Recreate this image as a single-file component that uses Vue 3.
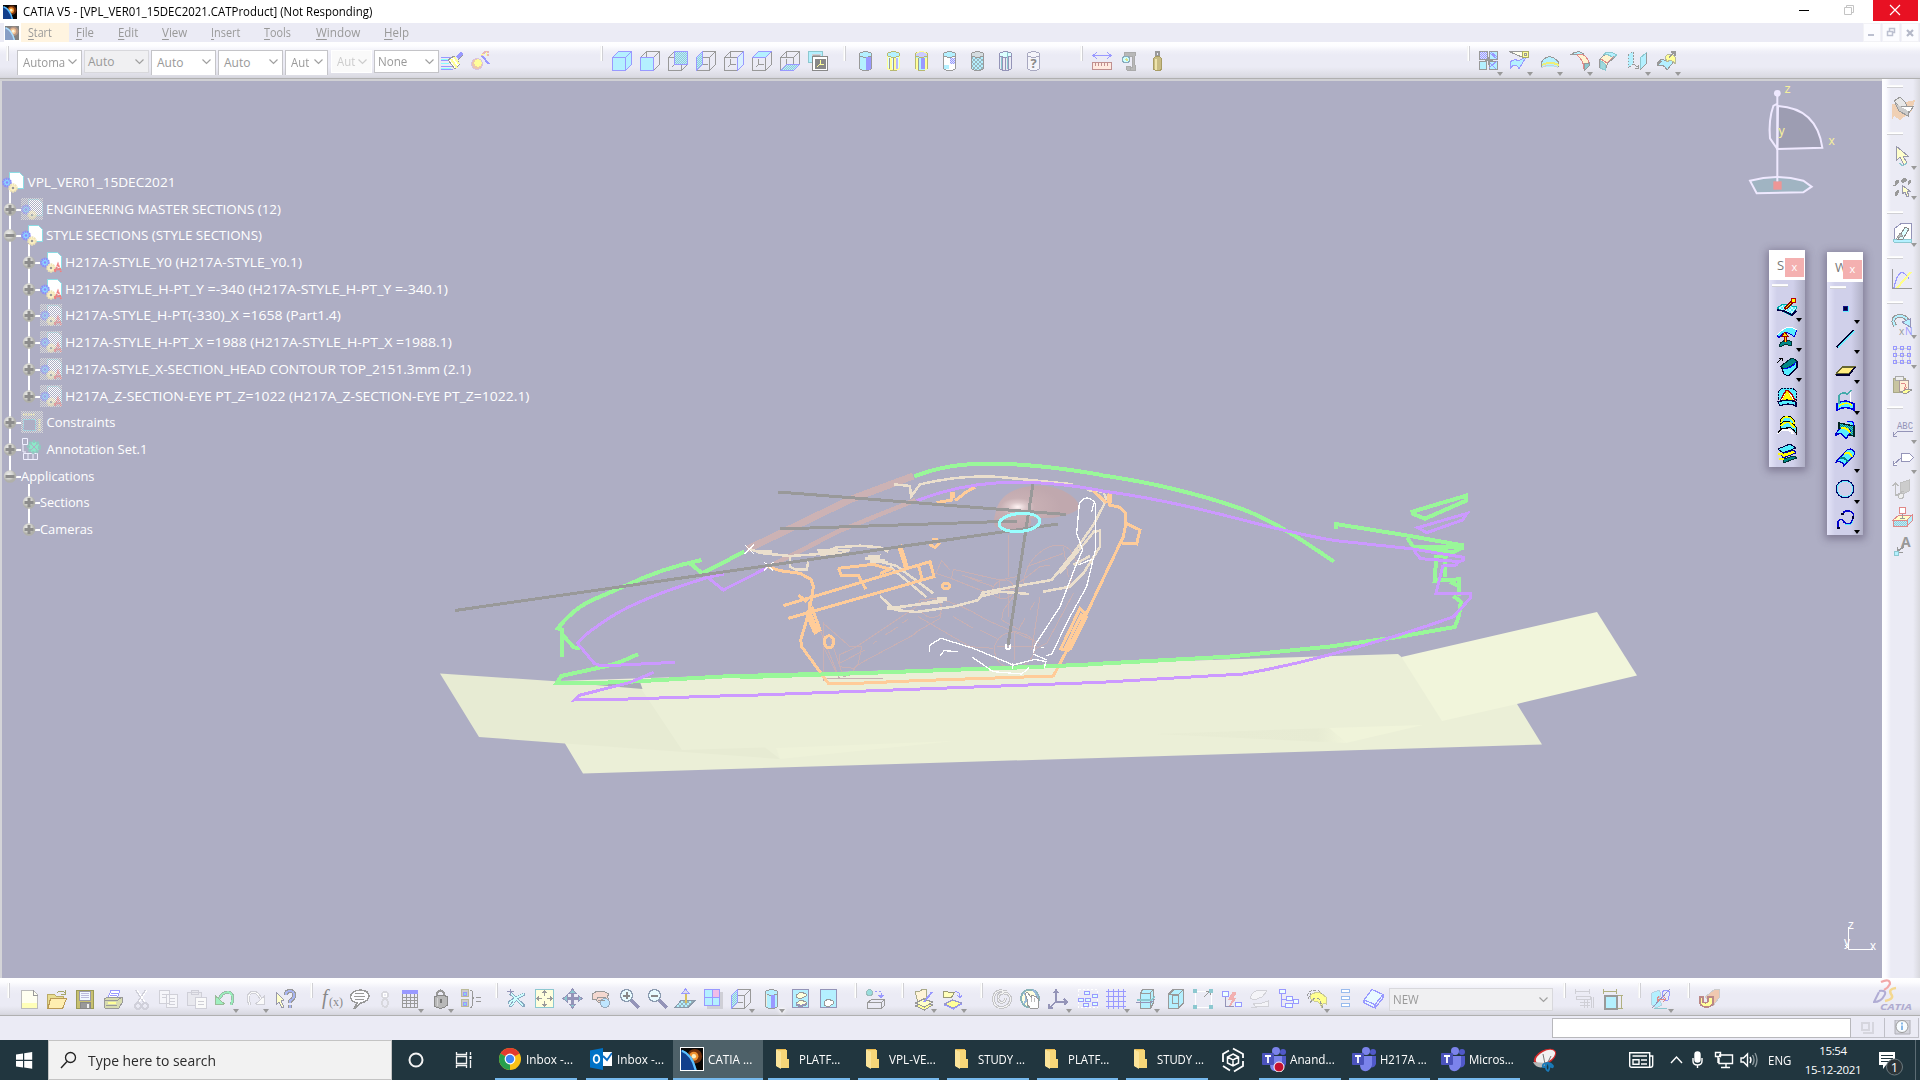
<script setup>
// Scales a label horizontally so that it fills the width reserved for it.
const vFit = {
  mounted(el, { value }) {
    const w = el.offsetWidth
    if (w) el.style.transform = `scaleX(${value / w})`
  }
}

const C = '#b4f0ff', B = '#9999ff', G = '#999999', Y = '#ffff99', R = '#e08888', T = '#8cc8d0', L = '#cfcfd6', N = '#9494b8'
const p = (d, s = G, f = 'none', w = 1) => `<path d="${d}" stroke="${s}" fill="${f}" stroke-width="${w}"/>`

const FACES = {
  front: 'M.5 6.5h13v13h-13z', back: 'M6.5.5h13v13h-13z', left: 'M.5 6.5l6-6v13l-6 6z',
  right: 'M13.5 6.5l6-6v13l-6 6z', top: 'M.5 6.5l6-6h13l-6 6z', bottom: 'M.5 19.5l6-6h13l-6 6z'
}
const wire = p('M.5 6.5h13v13h-13zM.5 6.5l6-6h13l-6 6M19.5.5v13l-6 6M6.5.5v5M6.5 8v5.5h5M6.5 13.5l-3 3')
const cube = (f, hatch) => wire + p(FACES[f], B, hatch ? 'url(#hatch)' : f === 'right' ? '#d8f0ff' : C)
const cyl = (body, top, line, extra = '') =>
  p('M2.5 3.5v13q0 3 6 3t6-3v-13', line, body) + `<ellipse cx="8.500" cy="3.500" rx="6" ry="2.700" stroke="${line}" fill="${top}"/>` + extra
const sheet = (y, f, s = G) => p(`M1.500 ${y}l8-4 9 3-8 5z`, s, f)

const I = {
  brush: p('M0 6.500h11M0 15.500h11', B) + p('M0 9.500h10M0 18.500h12', B) + p('M0 8h9M0 12.500h8M0 17h10', '#8ff') + p('M7 9l6-4 6 8-5 5z', G, '#fff') + p('M10 8l6 9M13 6l5 7', Y, 'none', 2) + p('M16 7l5-5', B, 'none', 4) + p('M17 9l5-5', G),
  wand: '<circle cx="6" cy="13" r="5.500" fill="#ecc9ad" stroke="#d9c3e2"/><circle cx="7" cy="12" r="3.600" fill="#ffff99"/>' + p('M11 5l7 8', B, 'none', 2) + p('M10 5l4-4M13 1h5M15 4h3', '#e8b8b8', 'none', 1.5) + p('M10 3h3M15 1v4', Y),
  cubeIso: p(FACES.front, B, C) + p(FACES.top, B, C) + p(FACES.right, B, C),
  cubeFront: cube('front'), cubeBack: cube('back', 1), cubeLeft: cube('left', 1), cubeRight: cube('right'), cubeTop: cube('top'), cubeBottom: cube('bottom', 1),
  views: p('M.5.5h14v11H.5z', T, C) + p('M4 3h8v8H4z', L, '#aaa') + p('M4.500 5.500h15v14h-15z', '#888', '#fff') + p('M7 8h10v9H7z', '#888', '#888') + p('M9 16l3-3V9M12 13h4', Y),
  cyl1: cyl(C, C, G) + p('M9 6h5v12q-2 1-5 1z', 'none', B) + p('M14.500 4v13', G),
  cyl2: cyl('#dff', C, '#b8b870') + p('M4.500 7v12M8.500 7v12M12 7v12', G) + p('M6 7v12M10 7v12', Y, 'none', 2) + p('M11 7h2v12h-2z', 'none', '#b8b8ff') + p('M2.500 5v11q0 3 6 3t6-3V5', Y),
  cyl3: cyl(C, '#ccf', '#b8b870') + p('M8 7h5v11H8z', 'none', B) + p('M4 7v12M13 7v12', Y, 'none', 2) + p('M5.500 7v12', G) + p('M2.500 3.500q2-3 6-3t6 3', Y),
  cyl4: cyl('#fff', C, G) + p('M9 7h5v6H9z', 'none', 'url(#hatchb)') + p('M3 14h5v4H3z', 'none', C),
  cyl5: cyl('url(#hatchc)', '#d4dce0', G),
  cyl6: cyl('none', '#dff', N) + p('M5.500 6v13M8.500 6v13M11.500 6v13', N) + p('M4.500 6v12M10.500 1v17', T),
  cyl7: cyl('#f4f4fa', '#f4f4fa', '#a8a8c0') + '<text x="8.500" y="17" font-size="13" font-weight="bold" text-anchor="middle" fill="#888">?</text>',
  ruler: p('M1 4.500h18M5 1L1 4.500 5 8M15 1l4 3.500L15 8', B) + p('M.5 11.500h19v7H.5z', '#c09090', '#ffeae0') + p('M3.500 12v3M6.500 12v3M9.500 12v3M12.500 12v3M15.500 12v3', '#c09090'),
  clamp: p('M2.500 1.500h11v3l-1 1v8l1 1v5h-5v-3h2v-11H7V8H2.500z', '#aaa', '#b8b8b8') + p('M4 15h4v4H5z', '#aaa', '#b8b8b8') + '<circle cx="4" cy="8.500" r="3.500" fill="#cff" stroke="#8ab"/>' + p('M4 8l2 2', '#dd8', 'none', 2),
  weight: '<circle cx="8.500" cy="2.800" r="2" fill="none" stroke="#999" stroke-width="2"/>' + p('M4.500 8.500q0-3 4-3t4 3v9q0 2-4 2t-4-2z', '#a89c64', '#c8bc84') + p('M7 8v11', '#eee4ac', 'none', 2),
  pattern: p('M.5.5h8v8h-8z', G, 'url(#hatchb)') + p('M10.500.5h8v8h-8z', G, C) + p('M.5 10.500h7v8h-7z', G, C) + p('M10.500 10.500h8v8h-8z', G, C) + p('M11 2l7 6M11 12l6 6M10 17l8-7M12 1l6 5', B) + p('M9.500 6v8M6 9.500h8', G),
  trim: p('M1 11q5-4 8-1l8-4-7 12Q6 10 1 18z', B, C) + p('M0 .5h14v6zM14 .5v6L0 .5', G, '#fffff0') + p('M13.500.5h6v6h-6z', '#aa6', Y) + p('M15.500 2.500h2v2h-2z'),
  dome: p('M1.500 16v-5Q9 .5 18.500 11v5', G, C) + p('M2 14q8-4 17 0', '#eeee77', 'none', 2) + p('M1.500 16.500q8-4 17 0', L),
  fillet: p('M0 4Q8-2 14 3l-5 1Q5 2 0 4z', G, C) + p('M7 4q4-2 8 1 4 4 4 8l-5 5q0-8-7-14z', R, '#fff4d0') + p('M14 13l5-1v3l-5 5z', G, T),
  chamfer: p('M0 10Q5 0 18 4l-9 8-3 7-6-3z', G, '#fff4d0') + p('M4 4Q9-2 18 4l-4 3Q9 2 4 4z', T, C) + p('M1 9v8l5 2v-6z', T, '#9fd8dc') + p('M2 8l6 4 7-7', R),
  sym: '<path d="M1 4l5-3v12l-5 4z" fill="#b4f0ff" stroke="#999" stroke-dasharray="1.500"/>' + p('M13 7l6-5v11l-6 6z', T, '#b4f0ff') + p('M19 2v11l-6 6', G) + p('M6 13l5 3M8 17h3v-3'),
  extrap: p('M0 13q5-8 8-3l4-5 6 4-8 10q-4-7-9-4z', G, C) + p('M8 6q5-6 10 0v7q-3-6-8-2z', '#bb9', Y) + p('M12 6l6-5M14 1h4v4', G, 'none', 1.600) + p('M0 14l4-4', G, 'none', 2),
  // bottom bar
  newf: p('M.5 1.500h12l4 4v14H.5z', '#bbb', '#fffff0') + p('M1 14h15v5H1z', 'none', '#ffffb8') + p('M12.500 1v5h4'),
  open: p('M.5 5.500h7l2 2h7v11H.5z', '#bbaa66', '#e8dc90') + p('M3.500 9.500h16l-4 10H1z', '#bb9955', '#ffeeb0') + p('M10 4q4-4 8 0M18 1v4h-4', '#a6a66a'),
  save: p('M.5 1.500h17v18h-17z', '#999955', '#c8c070') + p('M3.500 2h11v9h-11z', '#99a', '#f0f8ff') + p('M5 4.500h8M5 6.500h8M5 8.500h8', '#bbd') + p('M4.500 13.500h10v6h-10z', '#888', '#999') + p('M11 15h2v4h-2z', 'none', '#eee'),
  print: p('M5 9l3-8h9l-3 9z', B, '#fff') + p('M8 4h7M7 6h7M6 8h7', B) + p('M1 10l4-2h14v6l-3 5H2z', G, '#d8dcb0') + p('M1 11h14l4-3M3 16h11', G) + p('M5 14h8', Y, 'none', 2),
  cut: p('M3 1l8 12M13 1L5 13M5 14a3 3 0 1 0 .1 0M12 14a3 3 0 1 0 .1 0', '#d0d0da', 'none', 2) + p('M4 1l8 12M14 1L6 13', '#fff'),
  copy: p('M.5 1.500h10v13H.5zM7.500 5.500h11v13h-11z', '#d0d0d8', '#f6f6fa') + p('M3 5.500h4M3 8.500h4M10 9.500h6M10 12.500h6M10 15.500h6', '#d0d0d8'),
  paste: p('M.5 3.500h14v13H.5zM4 1h7v4H4z', '#cfcfd8', '#e8e8ee') + p('M8.500 8.500h11v11h-11z', '#cfcfd8', '#fafafa') + p('M11 12.500h6M11 15.500h6', L),
  undo: p('M3 12Q7 3 13 3q8 2 3 13', '#99bba8', 'none', 3) + p('M3 12Q7 3 13 3q7 2 3 13', '#99eebb', 'none', 1.500) + p('M.5 7v9l9-1z', '#9b9', '#9fefbf'),
  redo: p('M16 12Q12 3 7 3q-8 2-3 13', L, 'none', 3) + p('M16 12Q12 3 7 3q-7 2-3 13', '#fafafa') + p('M18.500 7v9l-9-1z', L, '#fafafa'),
  help: p('M1 3l8 8-3 1 3 6-2 1-3-6-3 3z', '#99a', '#ffffcc') + p('M11 6q0-4 4-4t4 4-4 6v2M15 16v3', G, 'none', 4) + p('M11 6q0-4 4-4t4 4-4 6v2M15 16v3', '#a8b4f0', 'none', 2),
  fx: '<text x="0" y="15" font-size="20" font-style="italic" font-family="Liberation Serif, serif" fill="#888">f</text><text x="7" y="17" font-size="12" font-family="Liberation Serif, serif" fill="#888">(x)</text>',
  talk: p('M7 14Q-1 12 1 6q3-5 10-5 8 1 8 6t-8 7l-7 6z', G, '#fcfcff', 1.400) + p('M5 4.500h9M4 7.500h11M5 10.500h9'),
  eight: p('M5 3a3 3 0 1 0 .1 0M5 10a3 4 0 1 0 .1 0', '#d8d8de', 'none', 2) + p('M5 4a2 2 0 1 0 .1 0', '#fff'),
  table: p('M.5 4.500h15v14H.5zM4.500 5v14M8.500 5v14M12.500 5v14M1 8.500h15M1 11.500h15M1 14.500h15') + p('M0 2.500h16', B, 'none', 4),
  lock: p('M4 10V4q3-5 7 0v6', G, 'none', 2.200) + p('M1.500 8q7-4 13 0v8q-6 6-13 1z', '#888', '#b8b8b8') + p('M8 10v4', '#777', 'none', 2) + p('M4 9v8', '#d4d4d4'),
  param: p('M.5.5h7v7h-7zM.5 10.500h7v7h-7z', '#bb9', '#ccc') + p('M2 3h3v3H2zM2 13h3v3H2z', B, '#8dd') + p('M9 1q3 0 2 5 0 3 2 3-2 0-2 4 1 6-2 6M15 8.500h5M15 12.500h5'),
  fly: p('M3 4l14 13M1 14l8-5 9-4M3 18l6-8 9 7', '#88a8c0', 'none', 3) + p('M4 5l12 11M2 14l7-5 8-4M4 17l5-7', '#cff', 'none', 1.500) + p('M0 2.500h7M3.500 0v6', N),
  fit: p('M.5.5h18v18H.5z', T, '#ffffdc') + p('M9.500 2v5M9.500 12v5M2 9.500h5M12 9.500h5M7.500 4l2-2 2 2M7.500 15l2 2 2-2M4 7.500l-2 2 2 2M15 7.500l2 2-2 2'),
  pan: p('M9.500 2v15M2 9.500h15', N, 'none', 3) + p('M6 4l3.500-4L13 4zM6 15l3.500 4 3.500-4zM4 6L0 9.500 4 13zM15 6l4 3.500-4 3.500z', N, T),
  rotate: p('M1 5Q9-1 18 5l-2 3q3 3 1 5l-7 1q-5-1-4-4l-5 1z', G, '#f4d8d0') + '<circle cx="14" cy="14" r="4.500" fill="#bfe6ff" stroke="#9ab"/>' + p('M6 8h9M7 11h7'),
  zin: p('M12 11l8 8', N, 'none', 3) + '<circle cx="7.500" cy="6.500" r="6" fill="#e8fbff" stroke="#8b9bb0" stroke-width="1.500"/>' + p('M4 6.500h7M7.500 3v7', '#888', 'none', 2),
  zout: p('M12 11l8 8', N, 'none', 3) + '<circle cx="7.500" cy="6.500" r="6" fill="#e8fbff" stroke="#8b9bb0" stroke-width="1.500"/>' + p('M4 6.500h7', '#888', 'none', 2),
  normal: p('M0 18.500l6-7h14l-7 7z', '#89a', 'url(#hatchc)') + p('M10.500 14V2', '#d8c060', 'none', 2) + p('M7 4l3.500-4L14 4z', B, '#dde'),
  multi: p('M3 3h16v17H3z', 'none', L) + p('M.5.5h15v16H.5z', B, C) + p('M9 1h6v7H9z', 'none', '#f0bce8') + p('M8.500 0v17M0 8.500h16', B),
  shade: cyl(C, C, G) + p('M8 6h4v13H8z', 'none', B) + p('M3.500 5v12', '#eed'),
  hide: p('M.5.5h16v18H.5z', N, C, 1.500) + p('M4 6l5-3 5 2v2l-6 3-4-2zM4 14l5-3 5 2v3l-6 2-4-2z', G, '#ffffdc') + p('M4 14v2l4 2 6-2v-2l-5 2z', 'none', N),
  swap: p('M.5.5h16v18H.5z', N, C, 1.500) + p('M4 13l4-3 5 2v3l-5 3-4-2z', G, '#fff'),
  boxball: '<circle cx="3.500" cy="3.500" r="3" fill="#9dd" stroke="#9bb"/><path d="M9 2h6v6" fill="none" stroke="#9999ff" stroke-dasharray="2"/>' + p('M12 6l3 3 3-3', B, B) + p('M1.500 13.500l4-3h13l-3 3zM1.500 13.500v6h14v-6M18.500 10.500v6l-3 3'),
  cata: p('M1 3q6 0 7-3h4v9l-8 4z', '#aa8', '#fff4d8') + sheet(17, Y) + sheet(14, '#ffffc8') + p('M10 13l8-10', B, '#dff', 2),
  catb: p('M.5 2.500h4l1 1h6l-3 5h-8z', '#997', '#ffffbb') + p('M12 3q5-1 5 5M14 6l3 3 2-3', B) + sheet(15, Y, '#99c') + p('M1.500 16l9 4 8-5', B),
  spiral: p('M15 3Q3-1 1.500 9q0 10 9 9.500 9-2 8-10-2-5-8-4.500-5 1-4.500 6 1 4 5 3 3-1 2-4', '#c4c4c8', 'none', 3) + p('M15 3Q3-1 1.500 9q0 10 9 9.500 9-2 8-10-2-5-8-4.500-5 1-4.500 6 1 4 5 3 3-1 2-4', '#f2f2f2'),
  spin: '<circle cx="10" cy="9.500" r="9" fill="#ffffe0" stroke="#8ab4b8" stroke-width="2"/>' + p('M4 4Q9 9 4 15M13 1q5 5 4 10', '#9bd', 'none', 2) + p('M8 12L5 5l2-2 4 5 0-1 2-1 1 1 2 0 1 2 1 0 1 2-1 8H10L7 15z', '#999', '#fff') + p('M11 9v4M14 9v4', '#bbb'),
  axes: p('M8 13V1M8 13h11M8 13l-7 6M6 4l2-3 2 3M16 10l3 3-3 3M1 15v4h4', N, 'none', 1.500),
  tree: '<path d="M.5.5h19v18H.5z" fill="none" stroke="#fff" stroke-dasharray="2"/>' + p('M6.500 2.500h5v3h-5zM14.500 5.500h5v3h-5zM.5 9.500h5v3h-5zM7.500 9.500h5v3h-5zM14.500 13.500h5v3h-5zM5.500 14.500h5v3h-5z', B, '#dff'),
  grid: p('M2.500 0v20M7.500 0v20M12.500 0v20M17.500 0v20M0 2.500h20M0 7.500h20M0 12.500h20M0 17.500h20', B),
  clip: p('M4.500 4.500l2-4h11v13l-3 6h-10z', G, C) + p('M4 4.500h10l3-4M14.500 4v15') + p('M1 11h14l4-3', T, 'none', 1.500) + p('M0 13.500h15l4-3', N),
  box: p('M.5 5.500l5-5h10v13l-5 6H.5z', G, C, 1.500) + p('M4.500 6.500h6v8h-6zM.5 5.500h10l5-5M10.500 5v14'),
  resize: p('M2 2h16v16H2z', '#fff') + p('M11 8l6-6M13 2h4v4') + p('M0 0h4v4H0zM16 0h4v4h-4zM0 16h4v4H0zM16 16h4v4h-4z', 'none', T),
  spark: p('M.5 2.500h6v5h-6zM13.500 13.500h6v4h-6z', B, '#eff') + p('M11 3L7 10h4l-4 8 7-9h-3l3-5z', '#f0b0b0', '#f4b0b0') + p('M12 17H3V8', N),
  ghost: p('M1 9Q4 1 11 1l7 1-5 6-8 3zM4 14h9l6-2v5H6zM2 18h6', '#d2d2d8', '#f4f4f8'),
  nodes: p('M.5.5h6v4h-6zM7.500 7.500h6v4h-6zM6.500 14.500h7v4h-7zM14.500 10.500h5v4h-5z', B, '#eff') + p('M2.500 5v12h4M2 10h5', B),
  gear: p('M4 9Q5 3 11 4l2-1 3 2 4 3v7q-4-2-4 4-3-8-7-6z', '#cc9', '#ffff90') + '<path d="M1 7Q3 0 12 1.500l4 3M4 14q4-7 9-4l4 9M2 10l3-6" fill="none" stroke="#999" stroke-dasharray="3 1.500"/>',
  bars: p('M.5.5h8v3h-8zM.5 7.500h8v3h-8zM.5 14.500h8v3h-8z', '#99bbee', '#fff'),
  layer: p('M1 11L9 .500l11 5-8 10zM1 11v3l11 5v-3.500M12 19l8-10V5.500', B, '#e8faff', 1.200),
  dims: p('M.5 2.500h14M.5 0v5M14.500 0v5M1 7.500h14v3H1zM5 13h10M5 16h10M16.500 8v11M18.500 8v11M9 10v9M12 10v9', '#cfcfd6', 'none', 1),
  dimc: p('M1.500 6.500h12v13h-12z', '#999', C, 2) + p('M.5 2.500h13M.5 0v5M13.500 0v5M18.500 6v13M15 6.500h5M15 19.500h5', '#b0b080', 'none', 1.500),
  measure: p('M2 4l7-3 2 4-2 5 3 6-6 3-5-4z', '#b8d0e0', C) + p('M2 19L20 0', N) + p('M12 3l3-2 5 2-2 8q-4 1-5-2z', B, 'none') + p('M7 10h9M13 7l3 3-3 3M9 7l-2 3 2 3', R) + p('M4 19h13', T),
  pipe: p('M6 8L16 0h4v9l-6 8z', '#ccc', '#f0c8b0') + p('M1 8h3v5q4 2 5-1V8h5v7q-3 4-8 3-5-1-5-5z', '#b88', Y, 1.500),
  // right bar
  seat: p('M0 7l9-1 14-3-3 11-12 9-6-4-2 4z', 'none', '#f0d0b4') + p('M2 4l6-4 5 5 3 7-8-2z', '#999', '#e8e8e8') + p('M8 9l14 0-7 9-9-5z', '#999', '#fff') + p('M3 6l4 8 9 5 0-5', '#999', '#ccc'),
  arrow: p('M4 1v15l4-4 4 8 3-2-4-7h5z', '#99a', '#ffffcc') + p('M7 18l4 3 4-3', T),
  pick: p('M9 4l4-3 2 2-4 3zM3 5l3-2 1 2-3 3zM16 5l2-2 1 2-3 3zM3 16l3-3 1 2-3 4zM1 9l3-1', G, G) + p('M10 8v9l3-2 2 5 2-1-2-5h3z', '#99a', '#ffffcc'),
  sketch: p('M2 17V7l8-6h9v16z', N, '#fff') + p('M1 17h18v3H2z', T, C) + p('M6 17l7-12 4 2-6 10z', '#888', '#dff') + p('M5 16l3-5 3 3z', '#999', '#bbb'),
  graph: p('M.5 0v19.500H20', G) + p('M2 19Q7-6 17 10', B, 'none', 1.200) + p('M5 19L19 3', '#ffff88', 'none', 2),
  repeat: p('M3 12Q-2 2 9 2q6 1 7 6', G, 'none', 4) + p('M3 12Q-2 2 9 2q6 1 7 6', C, 'none', 2) + p('M10 8l8-3v8z', N, C) + '<text x="7" y="21" font-size="10" fill="#999">x</text><text x="13" y="21" font-size="10" fill="#99f">N</text>',
  dots: p('M3 3h14v14H3zM10 3v14M3 10h14', L) + [3, 10, 17].map(a => [3, 10, 17].map(b => `<circle cx="${a}" cy="${b}" r="1.700" fill="none" stroke="#9999ff"/>`).join('')).join(''),
  clipb: p('M1 3h12v14H1z', '#a8a888', '#c8c4a0') + p('M3 1h8v4H3z', '#aaa', '#eee') + p('M7 5h9v11H7z', '#a99', '#fff0d8') + p('M9 9q6-2 4 3t2 0', R) + p('M9 17l6-3 5 1-7 4z', G, Y),
  abc: '<text x="5" y="10" font-size="11" textLength="16" lengthAdjust="spacingAndGlyphs" font-family="Liberation Mono, monospace" fill="#9494b8">ABC</text>' + p('M6 12.500h15M6 12l-5 5M1 13v4h4', N),
  tag: p('M9.500 3.500h8l4 4-4 4h-8zM9 8L1 15M1 11v4h4', N, '#fff'),
  noteg: p('M8 4l9-3v11l-9 5z', '#c0c0c0', '#cccccc') + p('M3.500 17V4M1 7l2.500-3L6 7M3.500 17l8-5', '#bbb', 'none', 1.500) + '<circle cx="9" cy="17" r="2.500" fill="#eee" stroke="#bbb"/>',
  stamp: p('M7.500.5h6v6h-6z', R, '#fff') + p('M1 13l6-5h13l-5 5z', R, '#ffffc8') + p('M1 13h14v6H1z', R, 'url(#hatch)') + p('M15 13l5-5v6l-5 5z', R, C) + p('M10.500 7v4M8 11h5', G),
  leadA: '<text x="9" y="10" font-size="14" fill="#999" font-weight="bold">A</text>' + p('M12 9l-7 6', G, 'none', 2) + p('M5 10v5h6', G) + p('M2.500 14.500h4v4h-4z', T, C),
  // floating palettes
  s1: p('M0 11l6-4 14 3-5 9z', '#0aa', 'url(#vivid)') + p('M0 13l7 1 8 4 4-4', '#004', 'none', 1.500) + p('M8 10l2 2M9 11l8-8', '#800', 'none', 3) + p('M9 11l8-8', '#ff0') + p('M14.500 1.500h4v4h-4z', '#b00', '#ff0', 1),
  s2: p('M0 8Q10-4 20 3l-3 7Q8 1 2 11z', '#00c', '#5ef', 1) + p('M0 8Q10-4 20 3', '#fff') + p('M2 18q6-8 13-3l-1 4q-6-3-11 1z', '#033', '#088') + p('M8 15V7', '#900', 'none', 3) + p('M8 15V7', '#fd0') + p('M5 9l3-4 3 4z', '#900', '#fd0'),
  s3: p('M4 9l11-8 5 3v7l-9 8-4-2z', '#003', '#5ef', 1.300) + p('M4 9l11-8 5 3q-5 6-13 8z', '#033', '#088') + p('M7 12q8-1 12-7', '#00f', 'none', 1.200) + p('M0 6l5-5M2 1h3v3', '#000'),
  s4: '<path d="M1 12V4l5-3h9l4 3v9z" fill="#5ef" stroke="#003" stroke-dasharray="2 1"/>' + p('M3 14Q8 4 10 3q5 2 8 11-8-4-15 0z', '#a00', '#fff', 1.300) + p('M6 12l4-8 5 8z', '#fd0', '#ff0') + p('M1 15q9-4 18 0v4q-8-4-16 0z', '#004', '#5ef', 1.300),
  s5: p('M3 9Q3 1 10 1q8 1 8 9', '#000', '#5ef', 1) + p('M4 8Q5 2 10 2q7 1 7 7', '#ff0', 'none', 1.500) + p('M3 11q3-7 10-4l6 5v6q-7-10-14-2z', '#000', '#5ef', 1) + p('M4 11q4-5 9-3l5 5', '#ff0', 'none', 1.500) + p('M1 19q3-6 10-4 4 1 5 4', '#fff', 'none', 2) + p('M1 18q3-6 10-4', '#000'),
  s6: p('M1 6l12-5 6 4-13 5z', '#004', '#5ef', 1) + p('M4 11l13-4 2 3-13 5z', '#00a', '#ff0', 1) + p('M6 16l11-3 3 2-14 5z', '#033', '#088', 1) + p('M1 11h5M2 16h5', '#ff0', 'none', 2),
  w1: p('M8.500 8.500h4v4h-4z', '#118', '#003') + p('M13.500 8v5.500H8', '#6ef'),
  w2: p('M2 19L19 2', '#6ef', 'none', 2) + p('M1.500 18.500L18.500 1', '#003', 'none', 1.500),
  w3: p('M1 14l6-7h13l-6 7z', '#663', '#ffec80', 1.300) + p('M1 15h13l6-8', '#003', 'none', 1.500),
  w4: p('M2 20v-6q8-6 17 0v6q-8-5-17 0z', '#00d', '#5ef', 1.500) + p('M4 16q7-5 13-1', '#ff0', 'none', 1.500) + p('M4 14V6q3-5 8-2 3-1 4-4', '#4aa', 'none', 1.500) + p('M15.500 2v10', '#fff'),
  w5: p('M4 3l15 3v10L4 12z', '#022', 'url(#teal)', 1.500) + p('M12 2q7-3 7 4', '#00f', '#5ef') + p('M0 16Q5 3 16 11l-5 8Q6 10 0 16z', '#00c', '#5ef', 1.300) + p('M6 8q6-1 9 5', '#ff0', 'none', 2),
  w6: p('M1 14L12 2q6-3 8 4L9 18q-2-6-8-4z', '#00c', '#5ef', 1.300) + p('M5 10q5-1 8 4', '#088', 'none', 2) + p('M9 6q6-3 8 3', '#ff0', 'none', 2),
  w7: '<circle cx="10" cy="10" r="8" fill="none" stroke="#6ef" stroke-width="1.500"/><circle cx="10" cy="10" r="8.800" fill="none" stroke="#006"/>',
  w8: p('M3 19v-6q3-5 6 0 6 5 8-1 4-9-3-10-5-1-6 3', '#00c', 'none', 1.500) + p('M10 15q6 3 8-3', '#5ef') + p('M2 18.500h3M17.500 7v3M6 4.500h3', '#003', 'none', 2)
}

// Turns [x, icon, arrowX] entries into consecutive cells.
const cells = (list, end) => list.map((e, i) => ({
  icon: e[1], arrow: e[2] ? e[2] - e[0] : 0, w: (list[i + 1] ? list[i + 1][0] : end) - e[0], grip: e[1] === '|', lit: e[3]
}))
const mid = cells([
  [441, 'brush'], [471, 'wand'], [600, '|'], [612, 'cubeIso'], [640, 'cubeFront'], [668, 'cubeBack'], [696, 'cubeLeft'], [724, 'cubeRight'], [752, 'cubeTop'], [780, 'cubeBottom'],
  [808, 'views'], [843, '|'], [857, 'cyl1'], [885, 'cyl2'], [913, 'cyl3'], [941, 'cyl4'], [969, 'cyl5'], [997, 'cyl6'], [1025, 'cyl7'], [1080, '|'], [1092, 'ruler'], [1122, 'clamp'], [1149, 'weight'],
  [1467, '|'], [1479, 'pattern', 1501], [1509, 'trim', 1531], [1540, 'dome', 1561], [1570, 'fillet', 1591], [1599, 'chamfer'], [1627, 'sym', 1649], [1657, 'extrap', 1679]
], 1700)
const low1 = cells([
  [7, '|'], [21, 'newf'], [47, 'open'], [76, 'save'], [103, 'print'], [133, 'cut'], [159, 'copy'], [187, 'paste'], [215, 'undo', 237], [246, 'redo', 267], [275, 'help'], [310, '|'],
  [322, 'fx'], [350, 'talk'], [380, 'eight'], [402, 'table', 422], [433, 'lock', 452], [461, 'param'], [495, '|'], [507, 'fly'], [535, 'fit'], [563, 'pan'], [591, 'rotate'], [619, 'zin'],
  [647, 'zout'], [675, 'normal'], [704, 'multi'], [731, 'cubeLeft', 753], [763, 'shade', 783, 1], [792, 'hide'], [820, 'swap'], [854, '|'], [866, 'boxball'], [901, '|'], [914, 'cata', 935], [943, 'catb', 965],
  [980, '|'], [992, 'spiral'], [1020, 'spin'], [1048, 'axes', 1070], [1078, 'tree'], [1106, 'grid', 1128], [1136, 'clip', 1158], [1168, 'box'], [1193, 'resize'], [1222, 'spark'],
  [1249, 'ghost'], [1279, 'nodes'], [1306, 'gear', 1328], [1341, 'bars'], [1363, 'layer']
], 1389)
const low2 = cells([[1563, '|'], [1575, 'dims'], [1603, 'dimc'], [1638, '|'], [1650, 'measure', 1672], [1687, '|'], [1699, 'pipe']], 1873)

const vcells = (list, end) => list.map((e, i) => ({ icon: e[1], arrow: e[2] ? e[2] - e[0] : 0, h: (list[i + 1] ? list[i + 1][0] : end) - e[0], grip: e[1] === '-' }))
const side = vcells([
  [85, '-'], [97, 'seat'], [132, '-'], [145, 'arrow', 168], [177, 'pick', 198], [211, '-'], [222, 'sketch', 245], [256, '-'], [269, 'graph'], [301, '-'], [314, 'repeat', 337], [345, 'dots', 367], [375, 'clipb'],
  [406, '-'], [419, 'abc', 442], [450, 'tag', 472], [479, 'noteg'], [507, 'stamp'], [537, 'leadA']
], 978)
const palS = vcells([[284, '-'], [297, 's1', 320], [327, 's2', 350], [357, 's3', 380], [387, 's4'], [415, 's5'], [443, 's6']], 467)
const palW = vcells([[286, '-'], [298, 'w1', 322], [329, 'w2', 352], [360, 'w3', 382], [390, 'w4', 413], [420, 'w5'], [448, 'w6', 471], [479, 'w7', 502], [509, 'w8', 532]], 535)

const menus = [['S', 'tart', 28, 24], ['F', 'ile', 76, 18], ['E', 'dit', 118, 20], ['V', 'iew', 162, 25], ['I', 'nsert', 211, 29], ['T', 'ools', 264, 27], ['W', 'indow', 316, 44], ['H', 'elp', 384, 25]]
  .map((m, i, a) => ({ key: m[0], rest: m[1], w: m[3], cell: (a[i + 1] ? a[i + 1][2] : 420) - m[2] }))

const combos = [
  { t: 'Automa', w: 65, k: 'tall', f: 42 }, { t: 'Auto', w: 65, k: 'off', f: 26 }, { t: 'Auto', w: 65, k: 'tall', f: 26 }, { t: 'Auto', w: 65, k: 'tall', f: 26 },
  { t: 'Aut', w: 43, k: 'tall', f: 18 }, { t: 'Aut', w: 41, k: 'faint', f: 18 }, { t: 'None', w: 65, k: 'plain', f: 29 }
]

const tree = [
  ['VPL_VER01_15DEC2021', 27.5, 148, 0, '', 'on'], ['ENGINEERING MASTER SECTIONS (12)', 46, 235, 10, '+', 'dim'], ['STYLE SECTIONS (STYLE SECTIONS)', 46, 216, 10, '-', 'on'],
  ['H217A-STYLE_Y0 (H217A-STYLE_Y0.1)', 65, 237, 29, '+', 'onr'], ['H217A-STYLE_H-PT_Y =-340 (H217A-STYLE_H-PT_Y =-340.1)', 65, 383, 29, '+', 'onr'],
  ['H217A-STYLE_H-PT(-330)_X =1658 (Part1.4)', 65, 276, 29, '+', 'dimr'], ['H217A-STYLE_H-PT_X =1988 (H217A-STYLE_H-PT_X =1988.1)', 65, 387, 29, '+', 'dimr'],
  ['H217A-STYLE_X-SECTION_HEAD CONTOUR TOP_2151.3mm (2.1)', 65, 406, 29, '+', 'dimr'], ['H217A_Z-SECTION-EYE PT_Z=1022 (H217A_Z-SECTION-EYE PT_Z=1022.1)', 65, 464.5, 29, '+', 'dimr'],
  ['Constraints', 46.5, 69, 10, '+', 'con'], ['Annotation Set.1', 46.5, 101, 10, '+', 'ann'], ['Applications', 21, 73.5, 10, '-', ''], ['Sections', 40, 49.5, 29, '+', ''], ['Cameras', 40, 53, 29, '+', '']
].map((r, i) => ({ t: r[0], x: r[1], w: r[2], n: r[3], s: r[4], k: r[5], y: Math.round(186.9 + i * 26.7) }))

const tasks = [
  { i: 'chrome', t: 'Inbox -...', w: 47, x: 495, c: 82 }, { i: 'outlook', t: 'Inbox -...', w: 47, x: 586, c: 82 }, { i: 'catia', t: 'CATIA ...', w: 44, x: 673, c: 90, a: 1 },
  { i: 'folder', t: 'PLATF...', w: 41, x: 768, c: 82 }, { i: 'folder', t: 'VPL-VE...', w: 47, x: 858, c: 81 }, { i: 'folder', t: 'STUDY ...', w: 47, x: 947, c: 82 },
  { i: 'folder', t: 'PLATF...', w: 41, x: 1037, c: 81 }, { i: 'folder', t: 'STUDY ...', w: 47, x: 1126, c: 82 }, { i: 'hex', x: 1217, c: 33 },
  { i: 'teams', t: 'Anand...', w: 45, x: 1259, c: 82, r: 1 }, { i: 'teams', t: 'H217A ...', w: 47, x: 1349, c: 81 }, { i: 'teams', t: 'Micros...', w: 45, x: 1438, c: 82 }
].map((t, i, a) => ({ ...t, gap: i ? t.x - a[i - 1].x - a[i - 1].c : 0 }))
</script>

<template>
  <div class="app">
    <svg class="defs" width="0" height="0">
      <defs>
        <pattern id="hatch" width="2" height="2" patternUnits="userSpaceOnUse"><rect width="2" height="2" fill="#b4f0ff" /><path d="M0 0h1v1H0zM1 1h1v1H1z" fill="#98c8d4" /></pattern>
        <pattern id="hatchb" width="2" height="2" patternUnits="userSpaceOnUse"><rect width="2" height="2" fill="#dfe4ff" /><path d="M0 0h1v1H0zM1 1h1v1H1z" fill="#9999ff" /></pattern>
        <pattern id="hatchc" width="4" height="4" patternUnits="userSpaceOnUse"><rect width="4" height="4" fill="#b4f0ff" /><path d="M0 0h2v2H0zM2 2h2v2H2z" fill="#98b4bc" /></pattern>
        <pattern id="vivid" width="4" height="4" patternUnits="userSpaceOnUse"><rect width="4" height="4" fill="#5ef" /><path d="M0 0h2v2H0zM2 2h2v2H2z" fill="#cdfaff" /></pattern>
        <pattern id="teal" width="2" height="2" patternUnits="userSpaceOnUse"><rect width="2" height="2" fill="#3cc8d0" /><path d="M0 0h1v1H0zM1 1h1v1H1z" fill="#088" /></pattern>
        <pattern id="check" width="2" height="2" patternUnits="userSpaceOnUse"><path d="M0 0h1v1H0zM1 1h1v1H1z" fill="#d8d8d8" /></pattern>
        <pattern id="checkw" width="2" height="2" patternUnits="userSpaceOnUse"><path d="M0 0h1v1H0zM1 1h1v1H1z" fill="#fff" /></pattern>
        <pattern id="shadeq" width="2" height="2" patternUnits="userSpaceOnUse"><path d="M0 0h1v1H0zM1 1h1v1H1z" fill="#8c8ca0" /></pattern>
        <radialGradient id="ball" cx=".4" cy=".35"><stop offset="0" stop-color="#ececea" /><stop offset=".6" stop-color="#d4d4d0" /><stop offset="1" stop-color="#b0b0aa" /></radialGradient>
        <radialGradient id="head" cx=".28" cy=".48" r=".5"><stop offset="0" stop-color="#fff4f4" /><stop offset=".2" stop-color="#dcc8ca" /><stop offset=".4" stop-color="#c8b0b4" /><stop offset="1" stop-color="#c0a8ae" /></radialGradient>
        <linearGradient id="fold"><stop offset="0" stop-color="#e9edd5" /><stop offset=".85" stop-color="#e7ebd3" /><stop offset="1" stop-color="#f0f4da" /></linearGradient>
        <symbol id="catia" viewBox="0 0 24 24"><rect width="24" height="24" fill="#080604" /><circle cx="15" cy="9" r="8" fill="#70300c" /><circle cx="14" cy="9" r="5" fill="#f09030" /><circle cx="14" cy="9" r="2.400" fill="#fff0c0" /><path d="M0 2Q12 5 17 24H0z" fill="#123f8c" /><path d="M1 3Q12 7 16 24" fill="none" stroke="#5cc0ff" stroke-width="2.500" /></symbol>
        <symbol id="teams" viewBox="0 0 24 26"><circle cx="14" cy="5" r="4" fill="#7b83eb" /><circle cx="21" cy="6" r="3" fill="#5059c9" /><path d="M17 10h7v8q-2 5-7 3z" fill="#5059c9" /><path d="M8 10h12v9q-2 7-8 6-4-1-4-6z" fill="#7b83eb" /><rect y="7" width="12" height="12" rx="1" fill="#4b53bc" /><path d="M3 10h6M6 10v7" stroke="#fff" stroke-width="1.800" /></symbol>
      </defs>
    </svg>

    <header class="title">
      <svg class="ico" width="14" height="14"><use href="#catia" width="14" height="14" /></svg>
      <span class="cap"><span v-fit="349.5" class="fit">CATIA V5 - [VPL_VER01_15DEC2021.CATProduct] (Not Responding)</span></span>
      <svg class="wc" width="126" height="23"><path d="M5 10.500h10" stroke="#000" /><path d="M50.500 7.500h7v7h-7zM52.500 7V5.500h7v7H58" fill="none" stroke="#c4c4c4" /><rect x="79" width="45" height="21" fill="#e81123" /><path d="M96 5l10 10M106 5L96 15" stroke="#fff" stroke-width="1.200" /></svg>
    </header>

    <nav class="menu">
      <span class="mico"><svg width="14" height="14"><use href="#catia" width="14" height="14" opacity=".5" /></svg></span>
      <span v-for="(m, i) in menus" :key="i" class="mi" :class="{ hot: !i }" :style="{ width: m.cell + 'px' }"><span v-fit="m.w" class="fit"><u>{{ m.key }}</u>{{ m.rest }}</span></span>
      <svg class="mdi" width="57" height="19"><path d="M.5.5h17v18H.5zM19.500.5h17v18h-17zM38.500.5h17v18h-17z" fill="#fcfcff" stroke="#f2f2f6" /><path d="M5 12h6" stroke="#bcc0d0" stroke-width="2" /><path d="M24.500 8.500h5v4h-5zM26.500 8V5.500h5v4H30" fill="none" stroke="#bcc0d0" stroke-width="1.500" /><path d="M44 7l6 6M50 7l-6 6" stroke="#b4b8c8" stroke-width="2.200" /></svg>
    </nav>

    <div class="bar top">
      <span class="grip first"></span>
      <div class="combos">
        <span v-for="(c, i) in combos" :key="i" class="combo" :class="c.k" :style="{ width: c.w + 'px' }">
          <span class="ct"><span v-fit="c.f" class="fit">{{ c.t }}</span></span>
          <svg width="9" height="6"><path d="M.5.5l4 4 4-4" fill="none" stroke="#a0a0a0" stroke-width="1.200" /></svg>
        </span>
      </div>
      <span v-for="(c, i) in mid" :key="'m' + i" class="cell" :style="{ width: c.w + 'px' }">
        <span v-if="c.grip" class="grip"></span>
        <template v-else><svg class="ic" width="22" height="21" v-html="I[c.icon]" /><i v-if="c.arrow" class="dd" :style="{ left: c.arrow - 4 + 'px' }"></i></template>
      </span>
    </div>

    <main class="work">
      <svg class="scene" width="1880" height="897" viewBox="2 81 1880 897">
        <g class="ground">
          <path d="M557 681L1398 654 1405 660 1517 704 1542 744.500 583 773.500 565 743.500z" fill="#ebefd7" />
          <path d="M440 673.500L640 687 682 750 765 747.500 780 759 565 743.500 479 737z" fill="#e7ebd3" />
          <path d="M776 748L955 741 780 759z" fill="#eef2d9" />
          <path d="M1401.500 657L1597 612 1637 675.500 1517 704 1442 721z" fill="#f1f5db" />
          <path d="M1154 734L1329 728 1346 743z" fill="url(#fold)" />
          <path d="M1329 728L1423 725 1346 743z" fill="#f0f4da" />
          <path d="M587 684.300L640 682 642.500 689z" fill="#a9abb6" />
        </g>
        <g class="thin" transform="translate(740 450) scale(.33333)">
          <path d="M250 517V692M255 687H430M240 540L298 685 250 590M270 560L310 680 330 675 355 640 365 590 330 590 250 520M298 615L350 590 530 470 540 450 590 445 605 470 600 505 530 545 520 555 370 635M298 615V650L340 655 370 635M298 640L375 600M435 555L475 530M485 520l20-12M400 580l12-8" />
          <path d="M590 445Q660 460 740 510L900 580M535 500L690 590 760 595M540 480Q570 520 605 490M545 460Q580 430 605 465M640 500l60 35M720 540l50 25M630 360L605 332 588 370 630 384 720 420 760 430M640 358L780 390 830 380M640 358l-5 26M665 375l60 18M690 385l70 25M755 430Q760 390 800 390 830 400 815 435 790 460 755 430M780 390v55M760 420h70" />
          <path d="M850 400Q860 330 910 300 960 270 990 300L1010 335 985 420M835 400L900 350 930 345M860 350L970 310M970 290L985 380M900 440L875 600M785 510L790 480 850 400M785 510L840 540M770 590H890M825 545V630M763 595Q770 550 825 545 890 555 885 600 870 650 820 655 765 650 763 595M880 600L920 580 1000 430M805 255V380M805 410V500M870 480l15-25M835 540l20-35" />
        </g>
        <g transform="translate(440 440) scale(.35714 .33333)">
          <path class="ws w6" d="M860 328L1150 178 1325 108" /><path class="ws w5" d="M920 380L1120 272 1332 180" />
        </g>
        <g transform="translate(740 450) scale(.33333)">
          <path d="M765 195Q775 130 850 112 910 98 970 122 1015 145 1017 170 1015 190 940 203L870 205Q890 240 800 240 750 240 765 195" fill="url(#head)" />
          <g class="beige">
            <path d="M462 103L510 108 513 140 540 103Q680 70 800 83L1000 103M27 297L70 310 150 318 240 312 290 292 360 287 420 292 445 305M230 300L330 300 300 310 240 314M375 325L415 318 400 335 445 338M380 325L470 348 580 430M450 350L560 442M150 318V350L165 358H200L205 335" />
            <path class="thick" d="M55 307h40M235 302h60M385 320h35M390 333h45M440 475h40M590 447h30" />
            <path d="M420 438L465 480 530 486 640 470 715 450 728 428 820 410 935 390 1000 310 1060 225 1095 158 1060 120M910 425L990 410 1030 370 1080 290V242L1062 245 960 370M445 478L620 448M480 470L610 455M720 440L780 425 868 432M1050 318L1000 345M1040 120L1090 125 1100 150" />
          </g>
          <g class="orange">
            <path d="M85 350L120 362 180 370 213 388 220 410 212 460 200 510 182 570 185 590 265 700 350 700 530 692 940 678 960 640 1040 490 1150 260 1158 220 1157 190 1140 172 1108 165 1108 130M1058 120L1100 160M1158 220L1200 240 1190 282 1145 280M1020 475L1038 492 985 600 962 597zM1026 490L975 595" />
            <path d="M130 467L570 335 582 380 145 505M295 355L400 343 450 358 420 370M295 355L305 378 355 376 377 417M535 345L547 390M210 455L207 510 225 548 240 540 215 470M215 500L230 540M175 435L200 455M590 158L635 150V125M645 152L680 125 705 112" />
            <path class="w5" d="M478 285L500 355M1108 132V160M205 480L225 545M1038 495L988 598M637 125V145" />
            <ellipse cx="267" cy="575" rx="14" ry="18" /><ellipse cx="618" cy="408" rx="12" ry="9" /><path d="M568 282L585 293 600 278M575 270h20" />
          </g>
        </g>
        <g class="green" transform="translate(440 440) scale(.35714 .33333)">
          <path d="M346 570L330 565Q370 510 420 483L520 437Q620 385 732 360M700 370L734 400 852 335M343 570V650M343 585L375 622 392 625M555 642Q500 672 450 682L340 708 326 730 500 727 800 709 1060 702" />
        </g>
        <g class="green" transform="translate(740 450) scale(.33333)"><path d="M523 79C600 50 660 42 740 41 860 40 1000 60 1080 74M0 682L400 668 900 650 1080 642" /></g>
        <g class="green" transform="translate(1100 450) scale(.35714 .33333)">
          <path d="M0 75C130 95 260 125 400 178 480 210 560 265 655 335M0 641L360 620 640 590 830 562 993 531Q1008 500 1010 455L990 438M660 236V222L857 256 1015 286V292L990 306 880 296 860 262M870 290L1018 293M875 185L1025 137V152L910 206 877 192zM942 316L937 392 1005 388V438M967 316V380M980 395L1005 408M945 318h30" />
        </g>
        <g class="purple" transform="translate(440 440) scale(.35714 .33333)">
          <path d="M795 402L750 412Q560 475 480 530 400 585 385 610L432 670 450 678 657 667M752 414L793 450 915 384M598 697L530 728 390 766 377 780 530 777 840 766" />
        </g>
        <g class="purple" transform="translate(740 450) scale(.33333)"><path d="M530 152Q650 105 780 98 930 92 1080 121M0 737L1080 697" /></g>
        <g class="purple" transform="translate(1100 450) scale(.35714 .33333)">
          <path d="M0 122Q170 145 400 210 560 255 660 272L870 296 1018 322V330L1000 338M878 300L897 326 998 334V345L960 348 940 432 1038 432V443L990 500Q850 555 640 615 520 650 400 672L0 697M890 233L1028 190 1015 210 915 248z" />
        </g>
        <g class="white" transform="translate(740 450) scale(.33333)">
          <path d="M568 605L570 585 603 565 700 595 820 645 885 628 918 635 912 655M697 622L760 665 845 672 868 652M600 618L612 602 655 605M880 610L885 585 960 470 1010 340 1028 300 1010 250 1018 160Q1040 128 1066 160V300L1040 410 990 500 935 612 918 618M880 612L920 630M1015 345L1055 328M1062 160L1055 185M818 640v18M903 592h8" />
          <path d="M14 284L42 312M42 284L14 312M72 336L100 362M100 336L72 362" />
          <circle class="w2" cx="804" cy="590" r="7" />
        </g>
        <g class="sight"><path d="M778 492L1066 514.500M780 529L1017 521M455 610.500L1058 524M1033 484L1008 645" /></g>
        <ellipse class="ring" cx="1019.500" cy="522.500" rx="20.500" ry="9" transform="rotate(-5 1019 522)" />

        <g transform="translate(1420 0) scale(.33333)" class="compass">
          <path d="M1074 318Q1190 325 1207 443L1072 447z" fill="url(#shadeq)" />
          <path d="M1070 312L1060 318Q1045 360 1050 415L1072 447M1072 285V545" />
          <path d="M990 542Q1070 520 1150 542L1175 560 1150 577 1010 580z" fill="#a0b4c2" />
          <circle cx="1072" cy="280" r="10" fill="#efe9ff" stroke="none" /><rect x="1060" y="544" width="25" height="25" fill="#ee9696" />
          <path d="M1072 530v14" />
        </g>
        <g class="axl"><text x="1784.500" y="92.500">z</text><text x="1778.500" y="135">y</text><text x="1828.500" y="145">x</text></g>
        <path d="M1848.500 927V949.500H1873" fill="none" stroke="#fff" /><path d="M1845 945l4 4" stroke="#fff" />
        <g class="axw"><text x="1848" y="929">z</text><text x="1844" y="946">y</text><text x="1870" y="950">x</text></g>

        <g class="tree">
          <path d="M10 190V475M29 244V397M29 484V530" stroke="#fff" stroke-width="2" fill="none" />
          <g v-for="(r, i) in tree" :key="i">
            <path v-if="r.n" :d="`M${r.n} ${r.y - 4}h${11}`" stroke="#fff" stroke-width="2" />
            <g v-if="r.n" :transform="`translate(${r.n} ${r.y - 4.5})`"><circle r="6.300" fill="url(#ball)" /><path :d="r.s === '+' ? 'M-4.500 0h9M0-4.500v9' : 'M-4.500 0h9'" stroke="#8c8c8c" stroke-width="3" /></g>
            <g v-if="r.k.startsWith('on') || r.k.startsWith('dim')" :transform="`translate(${r.n ? r.n + 11 : 2} ${r.y - 15})`">
              <rect v-if="r.k.startsWith('dim')" y="-1" width="22" height="22" fill="url(#check)" />
              <path d="M7.500.5h10l4 4v12h-14z" :fill="r.k.startsWith('dim') ? 'url(#checkw)' : '#fff'" stroke="#8cdce4" :stroke-opacity="r.k.startsWith('dim') ? 0.35 : 1" />
              <g :opacity="r.k.startsWith('dim') ? 0.6 : 1">
                <circle cx="5" cy="10.500" r="3.800" fill="#8cd4ff" stroke="#8c8cf8" stroke-width="2.200" stroke-dasharray="1.700 .6" /><circle cx="5" cy="10.500" r="1.300" fill="#88f" />
                <circle cx="11" cy="16" r="3.600" fill="#fff4c8" stroke="#f0e4b4" stroke-width="2.200" stroke-dasharray="1.700 .6" /><circle cx="11" cy="16" r="1.300" fill="#999" />
                <path v-if="r.k.endsWith('r')" d="M15 20l3-8 3 8M14 18l7-1" fill="none" stroke="#f08080" stroke-width="1.800" stroke-dasharray="2.500 .6" />
              </g>
            </g>
            <g v-if="r.k === 'con'" transform="translate(21 411)"><rect width="22" height="22" fill="url(#check)" /><rect x="2.500" y="8.500" width="12" height="11" fill="#aeaec4" stroke="#9adce8" stroke-dasharray="1.500 1" /><path d="M2 3.500h12M18.500 8v12" stroke="#eeeab8" stroke-dasharray="1.500 1" stroke-width="2" /></g>
            <g v-if="r.k === 'ann'" transform="translate(21 438)"><path d="M1.500.5h5v6h-5zM2 7v7h3M2.500 15.500h14v6h-14zM7 16v5M12 16v5" fill="none" stroke="#f0f0ff" /><circle cx="13" cy="9" r="5.500" fill="#8ce8c8" stroke="#90c8c0" stroke-width="3" stroke-dasharray="2.500 1.500" /><path d="M10 6l6 6M16 6l-6 6" stroke="#aeaec4" /></g>
            <text :x="r.x" :y="r.y" :textLength="r.w" lengthAdjust="spacingAndGlyphs">{{ r.t }}</text>
          </g>
        </g>
      </svg>

      <aside class="side">
        <div v-for="(c, i) in side" :key="i" class="vcell" :style="{ height: c.h + 'px' }">
          <span v-if="c.grip" class="hgrip"></span>
          <template v-else><svg class="vic" width="24" height="23" v-html="I[c.icon]" /><i v-if="c.arrow" class="dd" :style="{ top: c.arrow - 2 + 'px' }"></i></template>
        </div>
      </aside>

      <section v-for="(pl, k) in [palS, palW]" :key="k" class="pal" :class="'p' + k">
        <div class="ph"><span class="pt">{{ k ? 'W' : 'S' }}</span><span class="px">x</span></div>
        <div class="pb">
          <div v-for="(c, i) in pl" :key="i" class="vcell" :style="{ height: c.h + 'px' }">
            <span v-if="c.grip" class="hgrip"></span>
            <template v-else><svg class="vic" width="22" height="22" v-html="I[c.icon]" /><i v-if="c.arrow" class="dd" :style="{ top: c.arrow - 2 + 'px' }"></i></template>
          </div>
        </div>
      </section>
    </main>

    <div class="bar bot">
      <span class="lead"></span>
      <span v-for="(c, i) in low1" :key="i" class="cell" :style="{ width: c.w + 'px' }">
        <span v-if="c.grip" class="grip"></span>
        <template v-else><svg class="ic" width="22" height="21" v-html="I[c.icon]" /><i v-if="c.arrow" class="dd" :class="{ lit: c.lit }" :style="{ left: c.arrow - 4 + 'px' }"></i></template>
      </span>
      <span class="combo off new"><span class="ct"><span v-fit="26" class="fit">NEW</span></span><svg width="9" height="6"><path d="M.5.5l4 4 4-4" fill="none" stroke="#a0a0a0" stroke-width="1.200" /></svg></span>
      <span v-for="(c, i) in low2" :key="'b' + i" class="cell" :style="{ width: c.w + 'px' }">
        <span v-if="c.grip" class="grip"></span>
        <template v-else><svg class="ic" width="22" height="21" v-html="I[c.icon]" /><i v-if="c.arrow" class="dd" :style="{ left: c.arrow - 4 + 'px' }"></i></template>
      </span>
      <svg class="ds" width="42" height="34"><path d="M8 3Q17-1 17 5q-2 4-6 6" fill="none" stroke="#f2a8a8" stroke-width="2.200" /><path d="M6 12q9-1 5 5-3 6-10 6l5-10" fill="none" stroke="#b0acd4" stroke-width="2" /><path d="M23 9q-8 1-5 6 4 5-6 7" fill="none" stroke="#f4d890" stroke-width="2.500" /><text x="7" y="31" font-size="9.500" font-weight="bold" font-style="italic" fill="#b0acd0" textLength="32" lengthAdjust="spacingAndGlyphs">CATIA</text></svg>
    </div>

    <div class="status">
      <span class="inp"></span>
      <span class="sb"><svg width="16" height="14"><path d="M2 2h7v7H2zM13 1v11H3" fill="none" stroke="#d6d6de" stroke-width="2" /></svg></span>
      <span class="sb"><svg width="18" height="16"><path d="M2 0h15v14H2z" fill="#d4d4dc" stroke="#b0b0b8" /><circle cx="9" cy="6.500" r="6" fill="#f8fcff" stroke="#999" /><path d="M9 5.500V10M9 2.500v2" stroke="#88b8e8" stroke-width="2" /></svg></span>
    </div>

    <footer class="task">
      <svg class="win" width="48" height="40"><path d="M16 14.500l7-1v6.300h-7zM24.200 13.300l8-1.200v7.700h-8zM16 21h7v6.400l-7-1zM24.200 21h8v7.700l-8-1.200z" fill="#fff" /></svg>
      <div class="search"><svg width="18" height="18"><circle cx="10.500" cy="6.500" r="5" fill="none" stroke="#222" stroke-width="1.300" /><path d="M7 10.500L1 17" stroke="#222" stroke-width="1.400" /></svg><span class="st"><span v-fit="128" class="fit">Type here to search</span></span></div>
      <svg class="cort" width="103" height="40"><circle cx="24" cy="20" r="6.500" fill="none" stroke="#f4f4f4" stroke-width="2" /><path d="M64.500 16.500h10v7h-10zM64.500 12v2.500h10V12M64.500 28v-2.500h10V28M78.500 12v3M78.500 20v8" fill="none" stroke="#f4f4f4" stroke-width="1.300" /><path d="M77.500 16h2v3h-2z" fill="#fff" /></svg>
      <div v-for="(t, i) in tasks" :key="i" class="tk" :class="[{ act: t.a, run: t.t }, t.i]" :style="{ width: t.c + 'px', marginLeft: t.gap + 'px' }">
        <svg v-if="t.i === 'chrome'" width="22" height="22" viewBox="-11 -11 22 22"><circle r="11" fill="#fbc116" /><path d="M0 0L-9.500-5.500A11 11 0 0 1 9.500-5.500z" fill="#e33b2e" /><path d="M0 0L-9.500-5.500A11 11 0 0 0 0 11z" fill="#269f4c" /><circle r="5.400" fill="#fff" /><circle r="4.200" fill="#4285f4" /></svg>
        <svg v-else-if="t.i === 'outlook'" width="22" height="22"><path d="M11 4h11v14H11z" fill="#fff" /><path d="M13 8l4 4 5-7" fill="none" stroke="#0a6cc4" stroke-width="1.800" /><path d="M0 2.500L13 0v22L0 19.500z" fill="#0072c6" /><ellipse cx="6.500" cy="11" rx="2.800" ry="3.800" fill="none" stroke="#fff" stroke-width="1.800" /></svg>
        <svg v-else-if="t.i === 'catia'" width="24" height="24"><rect width="24" height="24" fill="#fff" /><use href="#catia" x="1" y="1" width="22" height="22" /></svg>
        <svg v-else-if="t.i === 'folder'" width="16" height="20"><path d="M3 0h9v18H3z" fill="#e8b84c" /><path d="M5 1h8v9h2v9H5z" fill="#f6d678" /><path d="M2 0l5 3v17l-5-3z" fill="#fbe49a" /></svg>
        <svg v-else-if="t.i === 'hex'" width="24" height="26" fill="none" stroke="#fff" stroke-width="1.800"><path d="M2 15V7l6-3.500M12 1.500L22 7v4M22 14v5l-9 5.500M9 23.500L2 19" /><path d="M12 7l5.500 3v6L12 19l-5.500-3v-6zM6.500 10l5.500 3 5.500-3M12 13v6" stroke-width="1.500" /></svg>
        <svg v-else width="24" height="26"><use href="#teams" width="24" height="26" /><circle v-if="t.r" cx="17" cy="21" r="5" fill="#c4122f" stroke="#fff" /></svg>
        <span v-if="t.t" class="tt"><span v-fit="t.w" class="fit">{{ t.t }}</span></span>
      </div>
      <svg class="snip" width="24" height="24"><ellipse cx="12" cy="9" rx="12" ry="7" fill="#d42b2b" transform="rotate(-28 12 9)" /><ellipse cx="12.500" cy="9" rx="10.500" ry="5.500" fill="#f2f2f2" transform="rotate(-28 12 9)" /><path d="M0 14q3 7 11 5l2-4z" fill="#b8b8b8" /><path d="M12 16L10 6M14 16l4-8" stroke="#777" /><path d="M13 15q-4 1-3 4 3 1 4-4 4 0 6 3 0 3-4-1 1 4-1 6-3-1-2-8" fill="none" stroke="#1a7ab8" stroke-width="1.800" /></svg>
      <svg class="tray" width="138" height="40" fill="none" stroke="#fff" stroke-width="1.400">
        <path d="M.7 12.700h20v14.600H2.700q-2 0-2-2zM20.700 16h3v9q0 2.300-2 2.300h-3" /><path d="M3.500 16h14.500M4 19.700h6v4.600H4zM12 20h6M12 24h6" />
        <path d="M43 22l5.500-6 5.500 6" transform="translate(-1 1)" /><rect x="66" y="12" width="5" height="10" rx="2.500" fill="#fff" /><path d="M64 18v3q0 4 4.500 4t4.500-4v-3M68.500 25v3" />
        <path d="M90 15h13.500v8.500H90V18M97 24v3M92 27.500h9M86.500 12.500h5v4h-5zM89 17v6" /><path d="M112 18h2.500l4-4v12l-4-4H112z" /><path d="M121 17q2 3 0 6" /><path d="M123.500 15q3 5 0 10M126 13q4 7 0 14" stroke="#8a979c" />
      </svg>
      <span class="eng"><span v-fit="23" class="fit">ENG</span></span>
      <div class="clock"><span>15:54</span><span>15-12-2021</span></div>
      <svg class="note" width="42" height="40"><path d="M2 12h16v13H9l-3 4v-4H2z" fill="#fff" /><path d="M4 15.500h12M4 18.500h12M4 21.500h8" stroke="#21363f" /><circle cx="17.500" cy="27" r="8" fill="#2c3438" stroke="#6c7a80" /><text x="17.500" y="31.500" font-size="13" text-anchor="middle" fill="#fff">1</text><path d="M38.500 0v40" stroke="#5c6c74" /></svg>
    </footer>
  </div>
</template>

<style>
body { margin: 0; background: #ebebf5; }
</style>

<style scoped>
.app { width: 1920px; height: 1080px; display: flex; flex-direction: column; overflow: hidden; background: #ebebf5; font-family: "Open Sans", "Noto Sans", sans-serif; font-size: 12px; }
.app > * { flex: none; }
.defs { position: absolute; }
.fit { display: inline-block; white-space: nowrap; transform-origin: 0 50%; }
.title { height: 23px; background: #fff; display: flex; align-items: center; color: #000; }
.ico { margin: 0 6px 0 3px; }
.cap { flex: 1; line-height: 23px; }
.wc { flex: none; }
.menu { height: 19px; display: flex; align-items: stretch; color: #999; line-height: 20px; }
.mico { width: 16px; padding-left: 5px; background: linear-gradient(90deg, #ebebf5 4px, #fff 4px); display: flex; align-items: center; }
.mi.hot { background: #fff4e0; padding-left: 7px; margin-right: 7px; width: 41px !important; box-sizing: content-box; flex: none; }
.mi u { text-underline-offset: 2px; }
.mdi { margin-left: auto; }
.bar { display: flex; background: linear-gradient(#fff 0, #fdfdff 4px, #f0f0f8 9px, #ebebf5 13px, #ebebf5 25px, #dcdce4 34px, #d4d4dc 36px); border-bottom: 1px solid #b0b0b0; box-sizing: border-box; }
.top { height: 37px; }
.bot { height: 38px; background: linear-gradient(#fff 0, #fdfdff 4px, #f0f0f8 10px, #ebebf5 16px, #ebebf5 28px, #dcdce4 35px, #d4d4dc 37px); }
.lead { width: 7px; }
.grip { display: block; width: 1px; height: 15px; margin-top: 4px; background: #fff; border-right: 1px solid #d0d0d4; border-left: 1px solid #f4f4f4; }
.bot .grip { margin-top: 5px; }
.grip.first { margin-left: 6px; margin-right: 8px; }
.combos { display: flex; width: 424px; align-items: flex-start; padding-top: 8px; }
.combo { box-sizing: border-box; height: 23px; border: 1px solid #c4c4c8; background: #fff; display: flex; align-items: center; justify-content: space-between; padding: 0 4px 0 5px; color: #999; margin-right: 2px; flex: none; }
.combo.tall { height: 25px; border-bottom: 0; padding-bottom: 2px; }
.combo.off { background: #f0f0f2; border-color: #d8d8dc; padding-left: 3px; }
.combo.faint { border-color: #fff; background: #fafafa; color: #ccc; margin-left: 1px; }
.combo.faint svg { opacity: .5; }
.combo.plain { padding-left: 3px; }
.ct { width: 0; overflow: visible; flex: 1; }
.new { width: 164px; height: 23px; margin: 10px 10px 0 0; }
.cell { position: relative; flex: none; }
.ic, .vic { shape-rendering: crispEdges; }
.ic { display: block; margin-top: 9px; overflow: visible; }
.bot .ic { margin-top: 11px; }
.dd { position: absolute; top: 30px; width: 0; height: 0; border: 3.500px solid transparent; border-top: 4px solid #999; border-bottom: 0; }
.bot .dd { top: 31px; }
.dd.lit { filter: drop-shadow(0 0 1px #fff) drop-shadow(0 0 2px #fff); }
.work { height: 899px; display: flex; position: relative; background: linear-gradient(#d0d0d4, #d0d0d4) 0 0 / 1882px 2px no-repeat, #ebebf5; }
.scene { display: block; margin: 2px 0 0 0; border-left: 2px solid #d4d4d8; background: #aeaec4; flex: none; height: 897px; }
.scene path, .scene ellipse, .scene circle { vector-effect: non-scaling-stroke; }
.thin path, .green path, .purple path, .white path, .white circle, .beige path, .orange path, .orange ellipse, .sight path, .ws, .ring { fill: none; shape-rendering: crispEdges; stroke-width: 3; }
.thin path { stroke: #c8b0b4; stroke-width: 1; }
.green path { stroke: #99f799; stroke-width: 4; }
.purple path { stroke: #cc99ff; }
.white path { stroke: #fff; stroke-width: 1.300; }
.white circle { stroke: #fff; stroke-width: 2; }
.beige path { stroke: #ebdfcd; stroke-width: 2.500; }
.beige .thick { stroke-width: 4; }
.orange path, .orange ellipse { stroke: #ffcc99; stroke-width: 3; }
.sight path { stroke: #999999; }
.ws { stroke: #ccb2b4; }
.ws.w6 { stroke-width: 7; }
.ws.w5 { stroke-width: 4.500; }
.orange .w5 { stroke-width: 5; }
.ring { stroke: #99ffff; }
.compass path { stroke: #efe9ff; stroke-width: 2; }
.compass path:not([fill]) { fill: none; }
.axl { fill: #f6f09c; font-size: 12.500px; font-family: "Liberation Sans", sans-serif; }
.axw { fill: #fff; font-size: 12px; font-family: "Liberation Sans", sans-serif; }
.tree text { fill: #fff; font-size: 12.600px; }
.side { width: 38px; box-sizing: border-box; padding-top: 6px; background: linear-gradient(90deg, #fff 0, #fbfbff 4px, #ebebf5 9px, #ebebf5 31px, #d8d8de 38px); }
.vcell { position: relative; }
.hgrip { display: block; width: 16px; height: 1px; margin-left: 5px; background: #fff; border-bottom: 1px solid #d0d0d4; border-top: 1px solid #fafafa; }
.vic { display: block; margin-left: 10px; overflow: visible; }
.side .dd { left: 29px; }
.pal { position: absolute; width: 36px; box-shadow: 0 2px 8px 2px rgba(70, 60, 90, .45); }
.p0 { left: 1769px; top: 171px; height: 217px; }
.p1 { left: 1827px; top: 173px; height: 283px; }
.ph { height: 30px; background: #fff; display: flex; align-items: center; color: #777; }
.pt { width: 8px; margin-left: 8px; font-size: 13px; white-space: nowrap; }
.px { position: relative; width: 19px; height: 19px; margin-top: 4px; background: #f4b0b0; color: #fff; text-align: center; line-height: 17px; font-size: 11px; }
.pb { padding-top: 4px; background: linear-gradient(90deg, #e4e4f8 0, #d0d0ea 8px, #d0d0ea 24px, #b0b0c6 36px); height: 187px; box-sizing: border-box; }
.p1 .pb { height: 253px; }
.pb .vic { margin-left: 8px; }
.pb .hgrip { margin-left: 3px; }
.pb .dd { left: 27px; border-top-color: #000; }
.ds { margin-top: 1px; }
.status { height: 24px; display: flex; padding: 2px 1px 0 1552px; box-sizing: border-box; }
.inp { width: 300px; height: 20px; background: #fff; border: 1px solid #b8b8bc; box-sizing: border-box; }
.sb { width: 34px; height: 20px; display: flex; align-items: center; justify-content: center; border-right: 1px solid #c0c0c8; border-bottom: 1px solid #c0c0c8; box-sizing: border-box; }
.task { height: 40px; background: #21363f; display: flex; align-items: center; color: #fff; }
.task > * { flex: none; }
.search { width: 344px; height: 40px; background: #f2f2f2; border: 1px solid #c4c4c4; box-sizing: border-box; display: flex; align-items: center; color: #2b2b2b; font-size: 15px; padding-left: 11px; }
.st { margin-left: 10px; }
.tk { height: 40px; display: flex; align-items: center; box-sizing: border-box; padding-left: 4px; }
.tk.run { border-bottom: 2px solid #76b9ed; }
.tk.act { background: #4e6169; padding-left: 7px; }
.tk.folder { padding-left: 6px; }
.tk.teams { padding-left: 3px; }
.tt { margin-left: 5px; width: 0; white-space: nowrap; }
.folder .tt { margin-left: 9px; }
.catia .tt, .teams .tt { margin-left: 4px; }
.snip { margin-left: 13px; }
.tray { margin-left: 72px; }
.eng { width: 23px; margin-left: 1px; }
.clock { width: 90px; margin-left: -3px; display: flex; flex-direction: column; align-items: center; line-height: 18px; font-size: 11.500px; }
.clock span { letter-spacing: -.35px; }
.clock span + span { line-height: 19px; }
.note { margin-left: -1px; }
</style>
